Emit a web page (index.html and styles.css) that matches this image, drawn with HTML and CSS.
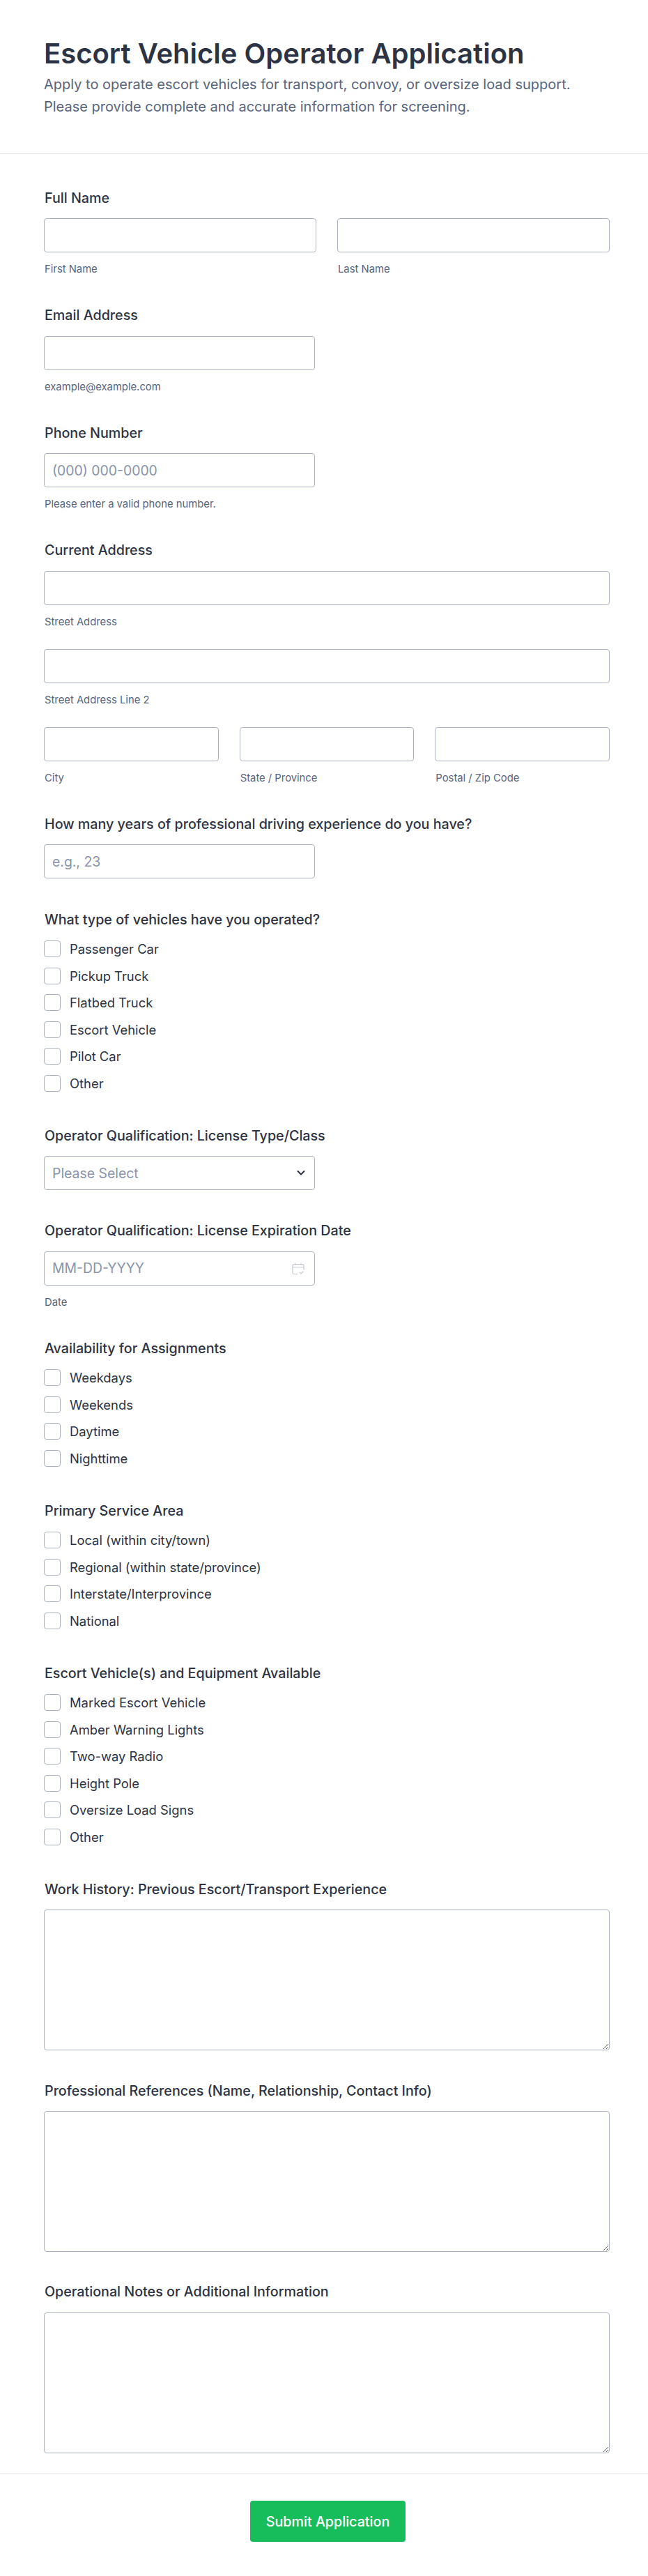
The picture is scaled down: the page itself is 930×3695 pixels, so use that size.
FILE: index.html
```html
<!DOCTYPE html>
<html lang="en">

<head>
    <meta charset="UTF-8">
    <meta name="viewport" content="width=device-width, initial-scale=1.0">
    <title>Escort Vehicle Operator Application</title>
    <link rel="stylesheet" href="styles.css">
</head>

<body>
    <form class="app-form">
        <!-- Header -->
        <div class="form-header">
            <h1>Escort Vehicle Operator Application</h1>
            <p>Apply to operate escort vehicles for transport, convoy, or oversize load support.<br>Please provide complete and accurate information for screening.</p>
        </div>

        <div class="form-body">
            <div class="field">
                <label class="field-label">Full Name</label>
                <div class="input-row">
                    <div class="input-col">
                        <input type="text" class="text-input">
                        <span class="sub-label">First Name</span>
                    </div>
                    <div class="input-col">
                        <input type="text" class="text-input">
                        <span class="sub-label">Last Name</span>
                    </div>
                </div>
            </div>

            <div class="field">
                <label class="field-label">Email Address</label>
                <input type="text" class="text-input input-short">
                <span class="sub-label">example@example.com</span>
            </div>

            <div class="field">
                <label class="field-label">Phone Number</label>
                <input type="text" class="text-input input-short" placeholder="(000) 000-0000">
                <span class="sub-label">Please enter a valid phone number.</span>
            </div>

            <div class="field">
                <label class="field-label">Current Address</label>
                <input type="text" class="text-input">
                <span class="sub-label">Street Address</span>
                <input type="text" class="text-input address-line">
                <span class="sub-label">Street Address Line 2</span>
                <div class="input-row address-line">
                    <div class="input-col">
                        <input type="text" class="text-input">
                        <span class="sub-label">City</span>
                    </div>
                    <div class="input-col">
                        <input type="text" class="text-input">
                        <span class="sub-label">State / Province</span>
                    </div>
                    <div class="input-col">
                        <input type="text" class="text-input">
                        <span class="sub-label">Postal / Zip Code</span>
                    </div>
                </div>
            </div>

            <div class="field field-plain">
                <label class="field-label">How many years of professional driving experience do you have?</label>
                <input type="text" class="text-input input-short" placeholder="e.g., 23">
            </div>

            <div class="field field-list">
                <label class="field-label">What type of vehicles have you operated?</label>
                <div class="check-list">
                    <label class="check-item"><input type="checkbox">Passenger Car</label>
                    <label class="check-item"><input type="checkbox">Pickup Truck</label>
                    <label class="check-item"><input type="checkbox">Flatbed Truck</label>
                    <label class="check-item"><input type="checkbox">Escort Vehicle</label>
                    <label class="check-item"><input type="checkbox">Pilot Car</label>
                    <label class="check-item"><input type="checkbox">Other</label>
                </div>
            </div>

            <div class="field field-plain">
                <label class="field-label">Operator Qualification: License Type/Class</label>
                <div class="input-wrap input-short">
                    <select class="text-input select-input">
                        <option>Please Select</option>
                    </select>
                    <svg class="select-arrow" width="12" height="9" viewBox="0 0 12 9" fill="none">
                        <path d="M1 1.5l5 5 5-5" stroke="#2C3345" stroke-width="2" />
                    </svg>
                </div>
            </div>

            <div class="field">
                <label class="field-label">Operator Qualification: License Expiration Date</label>
                <div class="input-wrap input-short">
                    <input type="text" class="text-input" placeholder="MM-DD-YYYY">
                    <svg class="date-icon" width="18" height="18" viewBox="0 0 18 18" fill="none">
                        <path d="M8 16.5H3a2 2 0 0 1-2-2v-10a2 2 0 0 1 2-2h12a2 2 0 0 1 2 2v6M1 6.5h16M5 .5v3M13 .5v3M11 14l2 2 3.5-3.5" stroke="#C3C8D4" stroke-width="1.2" />
                    </svg>
                </div>
                <span class="sub-label">Date</span>
            </div>

            <div class="field field-list">
                <label class="field-label">Availability for Assignments</label>
                <div class="check-list">
                    <label class="check-item"><input type="checkbox">Weekdays</label>
                    <label class="check-item"><input type="checkbox">Weekends</label>
                    <label class="check-item"><input type="checkbox">Daytime</label>
                    <label class="check-item"><input type="checkbox">Nighttime</label>
                </div>
            </div>

            <div class="field field-list">
                <label class="field-label">Primary Service Area</label>
                <div class="check-list">
                    <label class="check-item"><input type="checkbox">Local (within city/town)</label>
                    <label class="check-item"><input type="checkbox">Regional (within state/province)</label>
                    <label class="check-item"><input type="checkbox">Interstate/Interprovince</label>
                    <label class="check-item"><input type="checkbox">National</label>
                </div>
            </div>

            <div class="field field-list">
                <label class="field-label">Escort Vehicle(s) and Equipment Available</label>
                <div class="check-list">
                    <label class="check-item"><input type="checkbox">Marked Escort Vehicle</label>
                    <label class="check-item"><input type="checkbox">Amber Warning Lights</label>
                    <label class="check-item"><input type="checkbox">Two-way Radio</label>
                    <label class="check-item"><input type="checkbox">Height Pole</label>
                    <label class="check-item"><input type="checkbox">Oversize Load Signs</label>
                    <label class="check-item"><input type="checkbox">Other</label>
                </div>
            </div>

            <div class="field field-area">
                <label class="field-label">Work History: Previous Escort/Transport Experience</label>
                <textarea class="text-area"></textarea>
            </div>

            <div class="field field-area">
                <label class="field-label">Professional References (Name, Relationship, Contact Info)</label>
                <textarea class="text-area"></textarea>
            </div>

            <div class="field field-area">
                <label class="field-label">Operational Notes or Additional Information</label>
                <textarea class="text-area"></textarea>
            </div>
        </div>

        <!-- Footer -->
        <div class="form-footer">
            <button type="button" class="submit-button">Submit Application</button>
        </div>
    </form>
</body>

</html>
```

FILE: styles.css
```css
* {
    box-sizing: border-box;
}

body {
    margin: 0;
    background-color: #fff;
    color: #2c3345;
    font-family: 'Inter', sans-serif;
}

.form-header {
    height: 221px;
    padding: 49px 63px 0;
    border-bottom: 1px solid #e3e5ea;
}

.form-header h1 {
    margin: 0;
    font-size: 40px;
    line-height: 56px;
    font-weight: 600;
}

.form-header p {
    margin: 0;
    font-size: 20px;
    line-height: 32px;
    color: #57647e;
}

.form-body {
    padding: 48px 55px 0 63px;
}

/* Fields */
.field {
    margin-bottom: 38px;
}

.field-plain {
    margin-bottom: 43.2px;
}

.field-list {
    margin-bottom: 47.7px;
}

.field-area {
    margin-bottom: 42.5px;
}

.field-area:last-child {
    margin-bottom: 29.5px;
}

.field-label {
    display: block;
    margin-bottom: 14.4px;
    padding-left: 1px;
    font-size: 19.7px;
    line-height: 30px;
    font-weight: 500;
}

.text-input {
    display: block;
    width: 100%;
    height: 49px;
    padding: 0 11px;
    border: 1px solid #adb3c2;
    border-radius: 4px;
    background-color: #fff;
    color: #2c3345;
    font-family: 'Inter', sans-serif;
    font-size: 19.4px;
}

.text-input::placeholder {
    color: #8894ab;
}

.input-short {
    width: 389px;
}

.input-row {
    display: flex;
    gap: 30px;
}

.input-col {
    flex: 1;
}

.sub-label {
    display: block;
    margin-top: 11px;
    padding-left: 1px;
    font-size: 14.8px;
    line-height: 26px;
    color: #57647e;
}

.address-line {
    margin-top: 26.2px;
}

/* Select and date */
.input-wrap {
    position: relative;
}

.select-input {
    appearance: none;
    color: #8894ab;
}

.select-arrow {
    position: absolute;
    top: 20px;
    right: 14px;
}

.date-icon {
    position: absolute;
    top: 16px;
    right: 15px;
}

/* Checkbox lists */
.check-list {
    display: flex;
    flex-direction: column;
    gap: 14.6px;
    padding-top: 1.1px;
}

.check-item {
    display: flex;
    align-items: center;
    height: 24px;
    font-size: 18.4px;
    color: #2c3345;
}

.check-item input {
    appearance: none;
    flex: none;
    width: 24px;
    height: 24px;
    margin: 0 13px 0 0;
    border: 1px solid #adb3c2;
    border-radius: 4px;
    background-color: #fff;
}

/* Long answers */
.text-area {
    display: block;
    width: 100%;
    height: 202px;
    border: 1px solid #adb3c2;
    border-radius: 4px;
    background-color: #fff;
}

/* Footer */
.form-footer {
    display: flex;
    justify-content: center;
    height: 147px;
    padding: 38px 0 0 11px;
    border-top: 1px solid #e3e5ea;
}

.submit-button {
    width: 223px;
    height: 59px;
    border: none;
    border-radius: 4px;
    background-color: #18bd5b;
    color: #fff;
    font-family: 'Inter', sans-serif;
    font-size: 19.7px;
    font-weight: 500;
}
```
